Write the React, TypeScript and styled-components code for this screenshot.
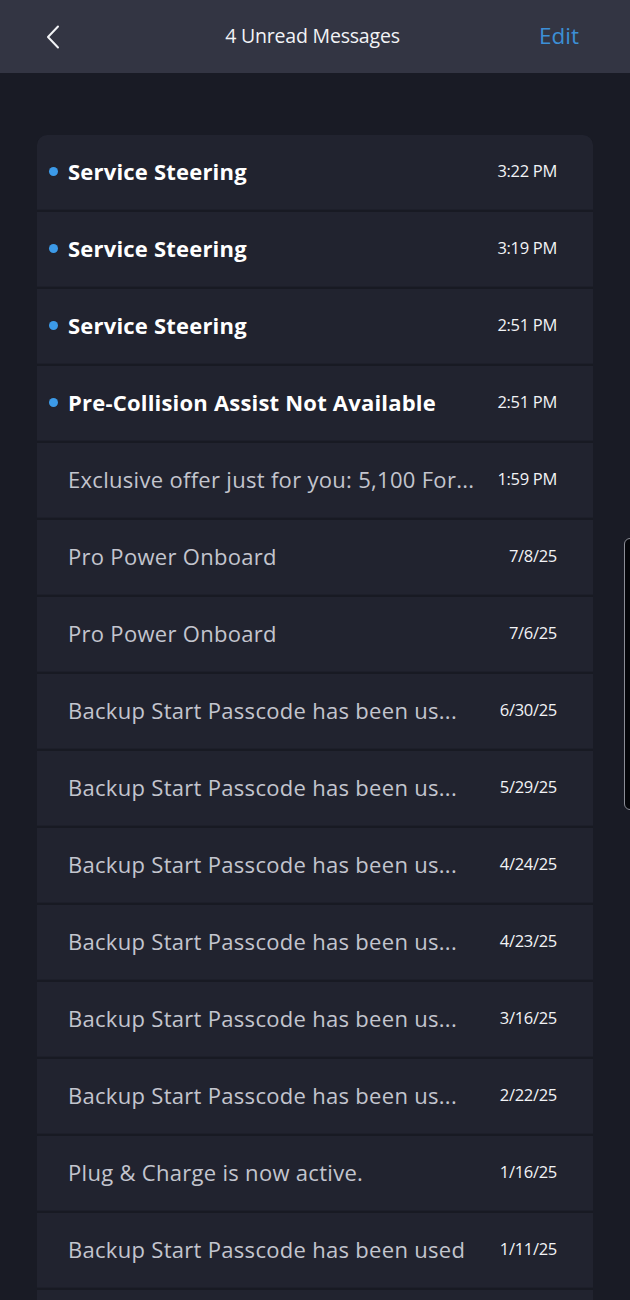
import React from 'react';
import styled, { createGlobalStyle } from 'styled-components';

const GlobalStyle = createGlobalStyle`
  html, body {
    margin: 0;
    padding: 0;
    background: #191b25;
  }
  * {
    box-sizing: border-box;
  }
`;

const Page = styled.div`
  position: relative;
  width: 630px;
  height: 1300px;
  overflow: hidden;
  background: #191b25;
  font-family: 'Open Sans', 'Noto Sans', sans-serif;
`;

const Header = styled.header`
  height: 73px;
  background: #333543;
  display: grid;
  grid-template-columns: 120px 1fr 120px;
  align-items: center;
  padding: 0 51px 0 46px;
`;

const BackButton = styled.button`
  background: none;
  border: 0;
  padding: 0;
  width: 20px;
  height: 26px;
  display: flex;
  align-items: center;
  cursor: pointer;
`;

const Title = styled.h1`
  margin: 0 0 2px;
  text-align: center;
  color: #f2f3f6;
  font-size: 19.5px;
  font-weight: 400;
  letter-spacing: -0.2px;
`;

const EditLink = styled.a`
  justify-self: end;
  color: #3c8fd6;
  font-size: 22.5px;
  font-weight: 400;
  margin-bottom: 2px;
`;

const List = styled.ul`
  list-style: none;
  margin: 62px 37px 0 37px;
  padding: 0;
  display: flex;
  flex-direction: column;
  gap: 2px;
  background: #181a23;
  border-radius: 10px 10px 0 0;
  overflow: hidden;
`;

const Row = styled.li`
  height: 75px;
  background: #21232f;
  display: flex;
  align-items: center;
  padding: 0 36px 3px 12px;
  border-bottom: 1px solid #1d1f2a;
`;

const Dot = styled.span<{ $visible: boolean }>`
  width: 9px;
  height: 9px;
  border-radius: 50%;
  background: ${({ $visible }) => ($visible ? '#3c9ae8' : 'transparent')};
  margin: 2px 10px 0 0;
  flex-shrink: 0;
`;

const Subject = styled.span<{ $unread: boolean }>`
  flex: 1;
  white-space: nowrap;
  overflow: hidden;
  font-size: 22px;
  letter-spacing: ${({ $unread }) => ($unread ? '0.2px' : '0.3px')};
  font-weight: ${({ $unread }) => ($unread ? 700 : 400)};
  color: ${({ $unread }) => ($unread ? '#ffffff' : '#c3c5ce')};
`;

const Time = styled.span`
  color: #f2f3f6;
  font-size: 16.5px;
  white-space: nowrap;
  margin-left: 16px;
  letter-spacing: -0.3px;
`;

const ScrollHandle = styled.div`
  position: absolute;
  top: 538px;
  left: 624px;
  width: 14px;
  height: 272px;
  border: 1.5px solid #8b8d96;
  border-radius: 6px;
  background: #05060a;
`;

const messages = [
  { subject: 'Service Steering', time: '3:22 PM', unread: true },
  { subject: 'Service Steering', time: '3:19 PM', unread: true },
  { subject: 'Service Steering', time: '2:51 PM', unread: true },
  { subject: 'Pre-Collision Assist Not Available', time: '2:51 PM', unread: true },
  { subject: 'Exclusive offer just for you: 5,100 For...', time: '1:59 PM', unread: false },
  { subject: 'Pro Power Onboard', time: '7/8/25', unread: false },
  { subject: 'Pro Power Onboard', time: '7/6/25', unread: false },
  { subject: 'Backup Start Passcode has been us...', time: '6/30/25', unread: false },
  { subject: 'Backup Start Passcode has been us...', time: '5/29/25', unread: false },
  { subject: 'Backup Start Passcode has been us...', time: '4/24/25', unread: false },
  { subject: 'Backup Start Passcode has been us...', time: '4/23/25', unread: false },
  { subject: 'Backup Start Passcode has been us...', time: '3/16/25', unread: false },
  { subject: 'Backup Start Passcode has been us...', time: '2/22/25', unread: false },
  { subject: 'Plug & Charge is now active.', time: '1/16/25', unread: false },
  { subject: 'Backup Start Passcode has been used', time: '1/11/25', unread: false },
  { subject: '', time: '', unread: false },
];

const App: React.FC = () => {
  return (
    <Page>
      <GlobalStyle />
      <Header>
        <BackButton aria-label="Back">
          <svg width="14" height="24" viewBox="0 0 14 24" fill="none">
            <path d="M12 1.5L2 12L12 22.5" stroke="#f2f3f6" strokeWidth="2" strokeLinecap="round" strokeLinejoin="round" />
          </svg>
        </BackButton>
        <Title>4 Unread Messages</Title>
        <EditLink>Edit</EditLink>
      </Header>
      <List>
        {messages.map((m, i) => (
          <Row key={i}>
            <Dot $visible={m.unread} />
            <Subject $unread={m.unread}>{m.subject}</Subject>
            <Time>{m.time}</Time>
          </Row>
        ))}
      </List>
      <ScrollHandle />
    </Page>
  );
};

export default App;
